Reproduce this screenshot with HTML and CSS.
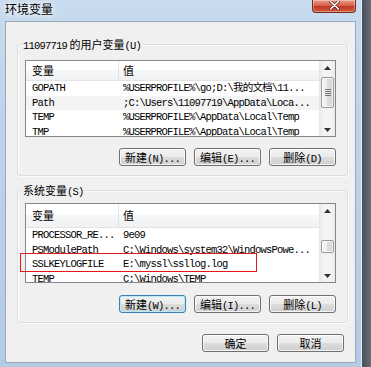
FILE: index.html
```html
<!DOCTYPE html>
<html lang="zh-CN">
<head>
<meta charset="utf-8">
<title>环境变量</title>
<link rel="stylesheet" href="styles.css">
</head>
<body>
<div class="screen">
  <div class="window">
    <div class="titlebar">
      <span class="title">环境变量</span>
      <div class="close">
        <svg width="11" height="9" viewBox="0 0 11 9"><path d="M1.5 0.5 L9.5 8 M9.5 0.5 L1.5 8" stroke="#5a1a10" stroke-width="3" stroke-linecap="round"/><path d="M1.5 0.5 L9.5 8 M9.5 0.5 L1.5 8" stroke="#fff" stroke-width="1.6" stroke-linecap="round"/></svg>
      </div>
    </div>
    <div class="client">
      <section class="group group-user">
        <div class="glabel"><span class="a">11097719</span> 的用户变量<span class="a">(U)</span></div>
        <div class="list list-user">
          <div class="lv">
            <div class="lv-head"><div class="h1">变量</div><div class="h2">值</div></div>
            <div class="row"><div class="c1">GOPATH</div><div class="c2">%USERPROFILE%\go;D:\我的文档\11...</div></div>
            <div class="row alt"><div class="c1">Path</div><div class="c2">;C:\Users\11097719\AppData\Loca...</div></div>
            <div class="row"><div class="c1">TEMP</div><div class="c2">%USERPROFILE%\AppData\Local\Temp</div></div>
            <div class="row"><div class="c1">TMP</div><div class="c2">%USERPROFILE%\AppData\Local\Temp</div></div>
          </div>
          <div class="sb">
            <div class="sb-btn"><svg width="7" height="4" viewBox="0 0 7 4"><path d="M3.5 0 L7 4 L0 4 Z" fill="#333"/></svg></div>
            <div class="sb-track"><div class="thumb grip" style="margin-top:3px;height:31px"><i></i><i></i><i></i><i></i></div></div>
            <div class="sb-btn"><svg width="7" height="4" viewBox="0 0 7 4"><path d="M0 0 L7 0 L3.5 4 Z" fill="#333"/></svg></div>
          </div>
        </div>
        <div class="btnrow">
          <button class="btn">新建<span class="a">(N)...</span></button>
          <button class="btn">编辑<span class="a">(E)...</span></button>
          <button class="btn">删除<span class="a">(D)</span></button>
        </div>
      </section>

      <section class="group group-sys">
        <div class="glabel">系统变量<span class="a">(S)</span></div>
        <div class="list list-sys">
          <div class="lv">
            <div class="lv-head"><div class="h1">变量</div><div class="h2">值</div></div>
            <div class="row"><div class="c1">PROCESSOR_RE...</div><div class="c2">9e09</div></div>
            <div class="row"><div class="c1">PSModulePath</div><div class="c2">C:\Windows\system32\WindowsPowe...</div></div>
            <div class="row"><div class="c1">SSLKEYLOGFILE</div><div class="c2">E:\myssl\ssllog.log</div></div>
            <div class="row"><div class="c1">TEMP</div><div class="c2">C:\Windows\TEMP</div></div>
          </div>
          <div class="sb">
            <div class="sb-btn"><svg width="7" height="4" viewBox="0 0 7 4"><path d="M3.5 0 L7 4 L0 4 Z" fill="#333"/></svg></div>
            <div class="sb-track"><div class="thumb" style="margin-top:23px;height:13px"></div></div>
            <div class="sb-btn"><svg width="7" height="4" viewBox="0 0 7 4"><path d="M0 0 L7 0 L3.5 4 Z" fill="#333"/></svg></div>
          </div>
        </div>
        <div class="btnrow">
          <button class="btn focus">新建<span class="a">(W)...</span></button>
          <button class="btn">编辑<span class="a">(I)...</span></button>
          <button class="btn">删除<span class="a">(L)</span></button>
        </div>
        <div class="mark"></div>
      </section>

      <div class="dlg-buttons">
        <button class="btn">确定</button>
        <button class="btn">取消</button>
      </div>
    </div>
  </div>
  <div class="desk"></div>
</div>
</body>
</html>
```

FILE: styles.css
```css
* { box-sizing: border-box; }
html, body { margin: 0; padding: 0; }
body {
  width: 371px;
  height: 367px;
  overflow: hidden;
  background: #5e6166;
  font-family: "Noto Sans CJK SC", sans-serif;
  color: #000;
}
.screen { display: flex; width: 371px; height: 367px; }
.window {
  width: 362px;
  height: 367px;
  flex: none;
  display: flex;
  flex-direction: column;
  padding: 0 5px;
  background: linear-gradient(to bottom, #c9dbee 0%, #bfd4ea 30%, #b4cbe5 100%);
  border-right: 1px solid #e3eefa;
}
.desk { flex: 1; background: linear-gradient(to right, #46505c, #6a6e74); }

.titlebar {
  height: 21px;
  flex: none;
  display: flex;
  justify-content: space-between;
  align-items: flex-start;
}
.title {
  font-size: 12px;
  line-height: 14px;
  margin-top: 2px;
  text-shadow: 0 0 4px #fff, 0 0 7px #fff;
}
.close {
  width: 44px;
  height: 13px;
  border: 1px solid #7a2a1d;
  border-top: none;
  border-radius: 0 0 4px 4px;
  background: linear-gradient(to bottom, #e99c8c 0%, #d8624c 45%, #c23a22 55%, #cd5a3e 100%);
  display: flex;
  align-items: flex-start;
  justify-content: center;
  box-shadow: inset 0 0 0 1px rgba(255,255,255,0.35);
}
.close svg { margin-top: 1px; }

.client {
  flex: none;
  height: 342px;
  border: 1px solid #97a9bd;
  background: #f0f0f0;
  padding: 0 0 0 11px;
  display: flex;
  flex-direction: column;
}

.group {
  position: relative;
  width: 331px;
  border: 1px solid #d5dfe5;
  border-radius: 3px;
  box-shadow: inset 1px 1px 0 #fbfbfb, 1px 1px 0 #fbfbfb;
  padding: 15px 11px 9px 7px;
}
.group-user { margin-top: 22px; }
.group-sys { margin-top: 14px; padding-top: 12px; }

.glabel {
  position: absolute;
  top: -8px;
  left: 4px;
  padding: 0 1px;
  background: #f0f0f0;
  font-size: 11px;
  line-height: 14px;
  white-space: nowrap;
}
.a {
  font-family: "Liberation Mono", monospace;
  font-size: 10.5px;
  letter-spacing: -0.8px;
}

.list {
  display: flex;
  width: 311px;
  border: 1px solid #828790;
  background: #fff;
}
.list-user { height: 77px; }
.list-sys { height: 80px; }
.lv { flex: 1; overflow: hidden; }
.lv-head {
  display: flex;
  height: 20px;
  background: linear-gradient(to bottom, #ffffff 0%, #ffffff 50%, #f6f7f9 50%, #f1f2f4 100%);
  border-bottom: 1px solid #e2e3e5;
  font-size: 11px;
  line-height: 19px;
}
.list-sys .lv-head { height: 24px; line-height: 23px; }
.h1 { width: 93px; padding-left: 6px; border-right: 1px solid #e3e4e6; }
.h2 { padding-left: 4px; }
.row {
  display: flex;
  height: 14.5px;
  font-family: "Liberation Mono", "Noto Sans CJK SC", monospace;
  font-size: 10.5px;
  letter-spacing: -0.8px;
  line-height: 14.5px;
  white-space: nowrap;
}
.row.alt { background: #f4f4f4; }
.c1 { width: 93px; padding-left: 6px; flex: none; }
.c2 { padding-left: 4px; }

.sb {
  width: 16px;
  flex: none;
  display: flex;
  flex-direction: column;
  background: linear-gradient(to right, #e6e6e6 0%, #f3f3f3 25%, #f3f3f3 75%, #ebebeb 100%);
}
.sb-btn {
  height: 13px;
  flex: none;
  display: flex;
  align-items: center;
  justify-content: center;
}
.sb-track { flex: 1; }
.thumb {
  margin-left: 2px;
  margin-right: 1px;
  border: 1px solid #9a9a9a;
  border-radius: 2px;
  background: linear-gradient(to right, #f4f4f4 0%, #ececec 50%, #dedede 50%, #d3d3d3 100%);
  box-shadow: inset 0 0 0 1px rgba(255,255,255,0.7);
  display: flex;
  flex-direction: column;
  align-items: center;
  justify-content: center;
  gap: 1px;
}
.thumb i {
  display: block;
  width: 6px;
  height: 1px;
  background: #777;
}

.btnrow {
  display: flex;
  justify-content: flex-end;
  gap: 8px;
  margin-top: 11px;
}
.group-sys .btnrow { margin-top: 12px; }
.btn {
  width: 67px;
  height: 18px;
  padding: 0;
  margin: 0;
  border: 1px solid #707070;
  border-radius: 3px;
  background: linear-gradient(to bottom, #f2f2f2 0%, #ebebeb 50%, #dddddd 50%, #cfcfcf 100%);
  box-shadow: inset 0 0 0 1px rgba(255,255,255,0.75);
  font-family: "Noto Sans CJK SC", sans-serif;
  font-size: 11px;
  line-height: 16px;
  color: #000;
  text-align: center;
  white-space: nowrap;
}
.btn.focus {
  border-color: #3c7fb1;
  box-shadow: inset 0 0 0 1px #b8e6fb;
}

.mark {
  position: absolute;
  left: 2px;
  top: 62px;
  width: 237px;
  height: 19px;
  border: 1px solid #e3181b;
}

.dlg-buttons {
  display: flex;
  justify-content: flex-end;
  gap: 8px;
  margin-top: 11px;
  padding-right: 11px;
}
```
